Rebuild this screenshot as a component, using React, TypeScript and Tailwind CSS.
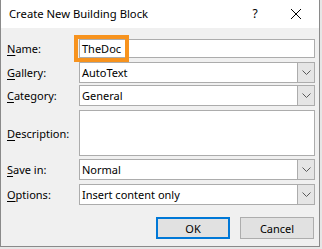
import React from "react";

const font = { fontFamily: '"Noto Sans", "Open Sans", sans-serif' };

const Label = ({ k, rest }: { k: string; rest: string }) => (
  <div className="w-[72px] shrink-0 text-[11px] text-black leading-none">
    <span className="underline underline-offset-[2px] decoration-[1px]">{k}</span>
    {rest}
  </div>
);

const Chevron = () => (
  <svg width="9" height="5" viewBox="0 0 9 5" className="block">
    <path d="M0.5 0.5 L4.5 4.5 L8.5 0.5" fill="none" stroke="#5a5a5a" strokeWidth="1" />
  </svg>
);

const Combo = ({ value }: { value: string }) => (
  <div className="flex h-[21px] flex-1 border border-[#acacac] bg-white">
    <div className="flex flex-1 items-center pl-[2px] text-[11px] leading-none text-black">{value}</div>
    <div className="flex w-[17px] items-center justify-center border-l border-[#acacac] bg-[#e5e5e5]">
      <Chevron />
    </div>
  </div>
);

const App = () => {
  return (
    <div className="h-[249px] w-[322px] bg-[#e6e6e6]" style={font}>
      <div className="flex h-[247px] w-[320px] flex-col border-x border-b border-[#8a8a8a] bg-[#f0f0f0]">
        {/* Title bar */}
        <div className="flex h-[28px] items-center bg-white">
          <div className="flex-1 pl-[8px] text-[11.25px] text-black">Create New Building Block</div>
          <div className="flex h-full w-[36px] items-center justify-center text-[12px] text-black">?</div>
          <div className="flex h-full w-[46px] items-center justify-center">
            <svg width="10" height="10" viewBox="0 0 10 10">
              <path d="M0 0 L10 10 M10 0 L0 10" stroke="#000" strokeWidth="1" />
            </svg>
          </div>
        </div>

        {/* Body */}
        <div className="relative flex flex-col pl-[6px] pr-[4px] pt-[11px]">
          <div className="flex items-center">
            <Label k="N" rest="ame:" />
            <div className="flex h-[19px] flex-1 items-center border border-[#acacac] bg-white pl-[2px] text-[11px] leading-none text-black">
              TheDoc
            </div>
          </div>
          <div className="mt-[4px] flex items-center">
            <Label k="G" rest="allery:" />
            <Combo value="AutoText" />
          </div>
          <div className="mt-[2px] flex items-center">
            <Label k="C" rest="ategory:" />
            <Combo value="General" />
          </div>
          <div className="mt-[4px] flex items-center">
            <Label k="D" rest="escription:" />
            <div className="h-[46px] flex-1 border border-[#acacac] bg-white" />
          </div>
          <div className="mt-[3px] flex items-center">
            <Label k="S" rest="ave in:" />
            <Combo value="Normal" />
          </div>
          <div className="mt-[4px] flex items-center">
            <Label k="O" rest="ptions:" />
            <Combo value="Insert content only" />
          </div>

          <div className="mt-[12px] mr-[1px] flex justify-end gap-[10px]">
            <button className="flex h-[22px] w-[74px] items-center justify-center border-2 border-[#0078d7] bg-[#e1e1e1] text-[11px] leading-none text-black">
              OK
            </button>
            <button className="flex h-[22px] w-[74px] items-center justify-center border border-[#adadad] bg-[#e1e1e1] text-[11px] leading-none text-black">
              Cancel
            </button>
          </div>

          {/* highlight around the name value */}
          <div className="absolute left-[73px] top-[7px] h-[27px] w-[55px] border-4 border-[#f7931e]" />
        </div>
      </div>
    </div>
  );
};

export default App;
